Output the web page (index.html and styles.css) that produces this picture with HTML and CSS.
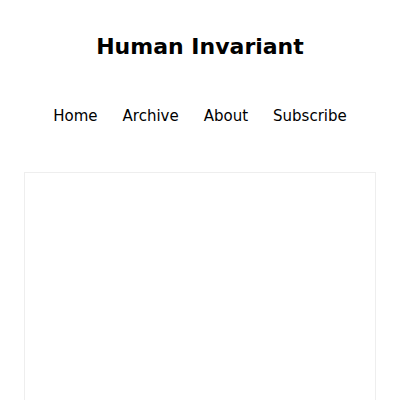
FILE: index.html
```html
<!DOCTYPE html>
<html>
<head>
<meta charset="utf-8">
<link rel="stylesheet" href="styles.css">
</head>
<body>
<header class="site-header">
  <h1 class="site-title">Human Invariant</h1>
  <nav class="site-nav">
    <a href="#">Home</a>
    <a href="#">Archive</a>
    <a href="#">About</a>
    <a href="#">Subscribe</a>
  </nav>
</header>
<main class="content">
  <div class="card"></div>
</main>
</body>
</html>
```
FILE: styles.css
```css
html, body {
  margin: 0;
  padding: 0;
  background: #fff;
}
body {
  font-family: "DejaVu Sans", sans-serif;
  color: #000;
}
.site-header {
  text-align: center;
  padding-top: 33px;
}
.site-title {
  margin: 0;
  font-size: 22px;
  font-weight: bold;
  line-height: 28px;
}
.site-nav {
  display: flex;
  justify-content: center;
  gap: 25px;
  margin-top: 45px;
  font-size: 15px;
  line-height: 20px;
}
.site-nav a {
  color: #000;
  text-decoration: none;
}
.content {
  padding: 46px 24px 0;
}
.card {
  border: 1px solid #eee;
  height: 400px;
}
```
